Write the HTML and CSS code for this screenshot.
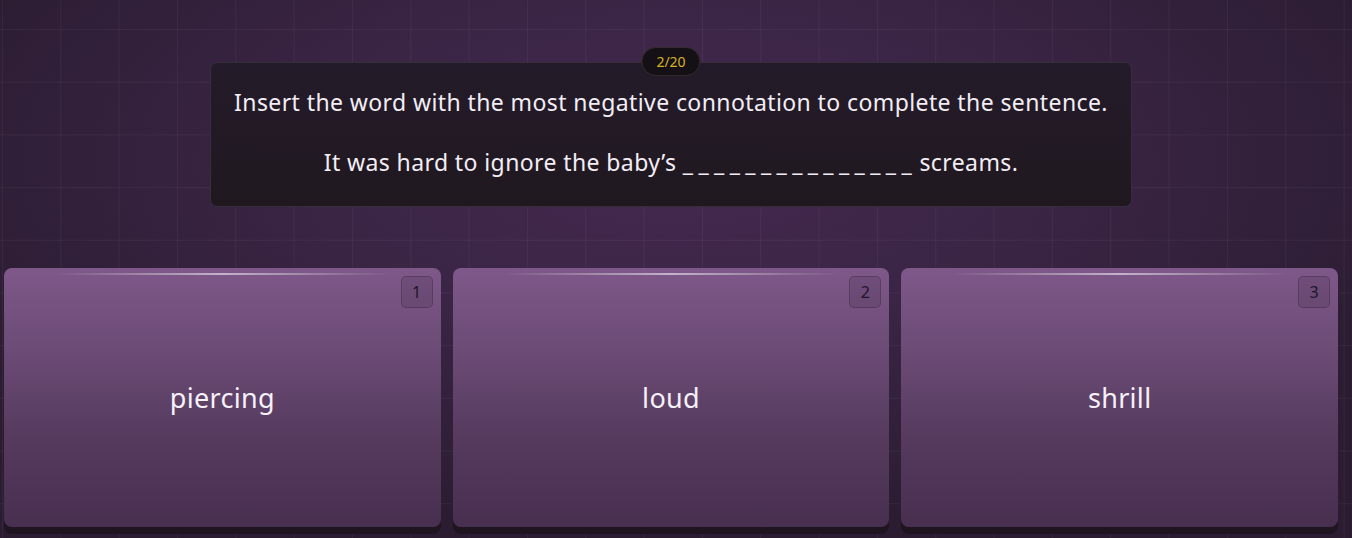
FILE: index.html
```html
<!DOCTYPE html>
<html lang="en">
<head>
    <meta charset="UTF-8">
    <meta name="viewport" content="width=device-width, initial-scale=1.0">
    <title>Quiz</title>
    <link rel="stylesheet" href="styles.css">
</head>
<body>

    <div class="page">
        <div class="question">
            <span class="counter">2/20</span>
            <p class="prompt">Insert the word with the most negative connotation to complete the sentence.</p>
            <p class="prompt">It was hard to ignore the baby’s <span class="blank">_______________</span> screams.</p>
        </div>

        <div class="answers">
            <button class="answer">
                <span class="key">1</span>
                piercing
            </button>
            <button class="answer">
                <span class="key">2</span>
                loud
            </button>
            <button class="answer">
                <span class="key">3</span>
                shrill
            </button>
        </div>
    </div>

</body>
</html>
```

FILE: styles.css
```css
html, body {
    margin: 0;
    height: 100%;
}
body {
    font-family: "Noto Sans", sans-serif;
    color: #f3eef5;
    background-color: #33223c;
    background-image:
        linear-gradient(to right, rgba(255,255,255,0.045) 1px, transparent 1px),
        linear-gradient(to bottom, rgba(255,255,255,0.045) 1px, transparent 1px),
        radial-gradient(ellipse 60% 70% at 50% 30%, #45294f 0%, #3a2545 45%, #2b1c31 100%);
    background-size: 58.33px 52.7px, 58.33px 52.7px, 100% 100%;
    background-position: 2px 29px, 2px 29px, 0 0;
    overflow: hidden;
}
.page {
    padding: 62px 14px 0 4px;
}
.question {
    position: relative;
    width: 920px;
    margin: 0 auto;
    padding: 24px 0 28px;
    background: linear-gradient(to bottom, #241b2a, #20181f);
    border: 1px solid #372d3b;
    border-radius: 7px;
    text-align: center;
}
.counter {
    position: absolute;
    top: -16px;
    left: 50%;
    transform: translateX(-50%);
    padding: 5px 14px;
    font-size: 14px;
    line-height: 17px;
    color: #d6b02a;
    background: #141015;
    border: 1px solid #332c2a;
    border-radius: 15px;
}
.prompt {
    margin: 0;
    font-size: 23px;
    line-height: 31px;
    letter-spacing: 0.4px;
}
.prompt + .prompt {
    margin-top: 29px;
}
.blank {
    letter-spacing: 5.4px;
    margin-right: -4px;
}
.answers {
    display: flex;
    gap: 12px;
    margin-top: 61px;
}
.answer {
    position: relative;
    flex: 1;
    height: 259px;
    font-family: inherit;
    font-size: 27px;
    letter-spacing: 0.3px;
    color: #f6f0f8;
    background: linear-gradient(to bottom, #7e5889 0%, #6a4a74 35%, #573c60 62%, #482e4f 100%);
    border: none;
    border-radius: 8px;
    box-shadow: 0 7px 0 #1f1520;
    cursor: pointer;
}
.answer::before {
    content: "";
    position: absolute;
    top: 5px;
    left: 50px;
    right: 50px;
    height: 2px;
    background: linear-gradient(to right, rgba(255,255,255,0), rgba(255,255,255,0.55), rgba(255,255,255,0));
}
.key {
    position: absolute;
    top: 8px;
    right: 8px;
    width: 30px;
    height: 30px;
    line-height: 30px;
    font-size: 16px;
    letter-spacing: 0;
    color: #20152a;
    background: rgba(0,0,0,0.1);
    border: 1px solid rgba(0,0,0,0.2);
    border-radius: 5px;
}
```
